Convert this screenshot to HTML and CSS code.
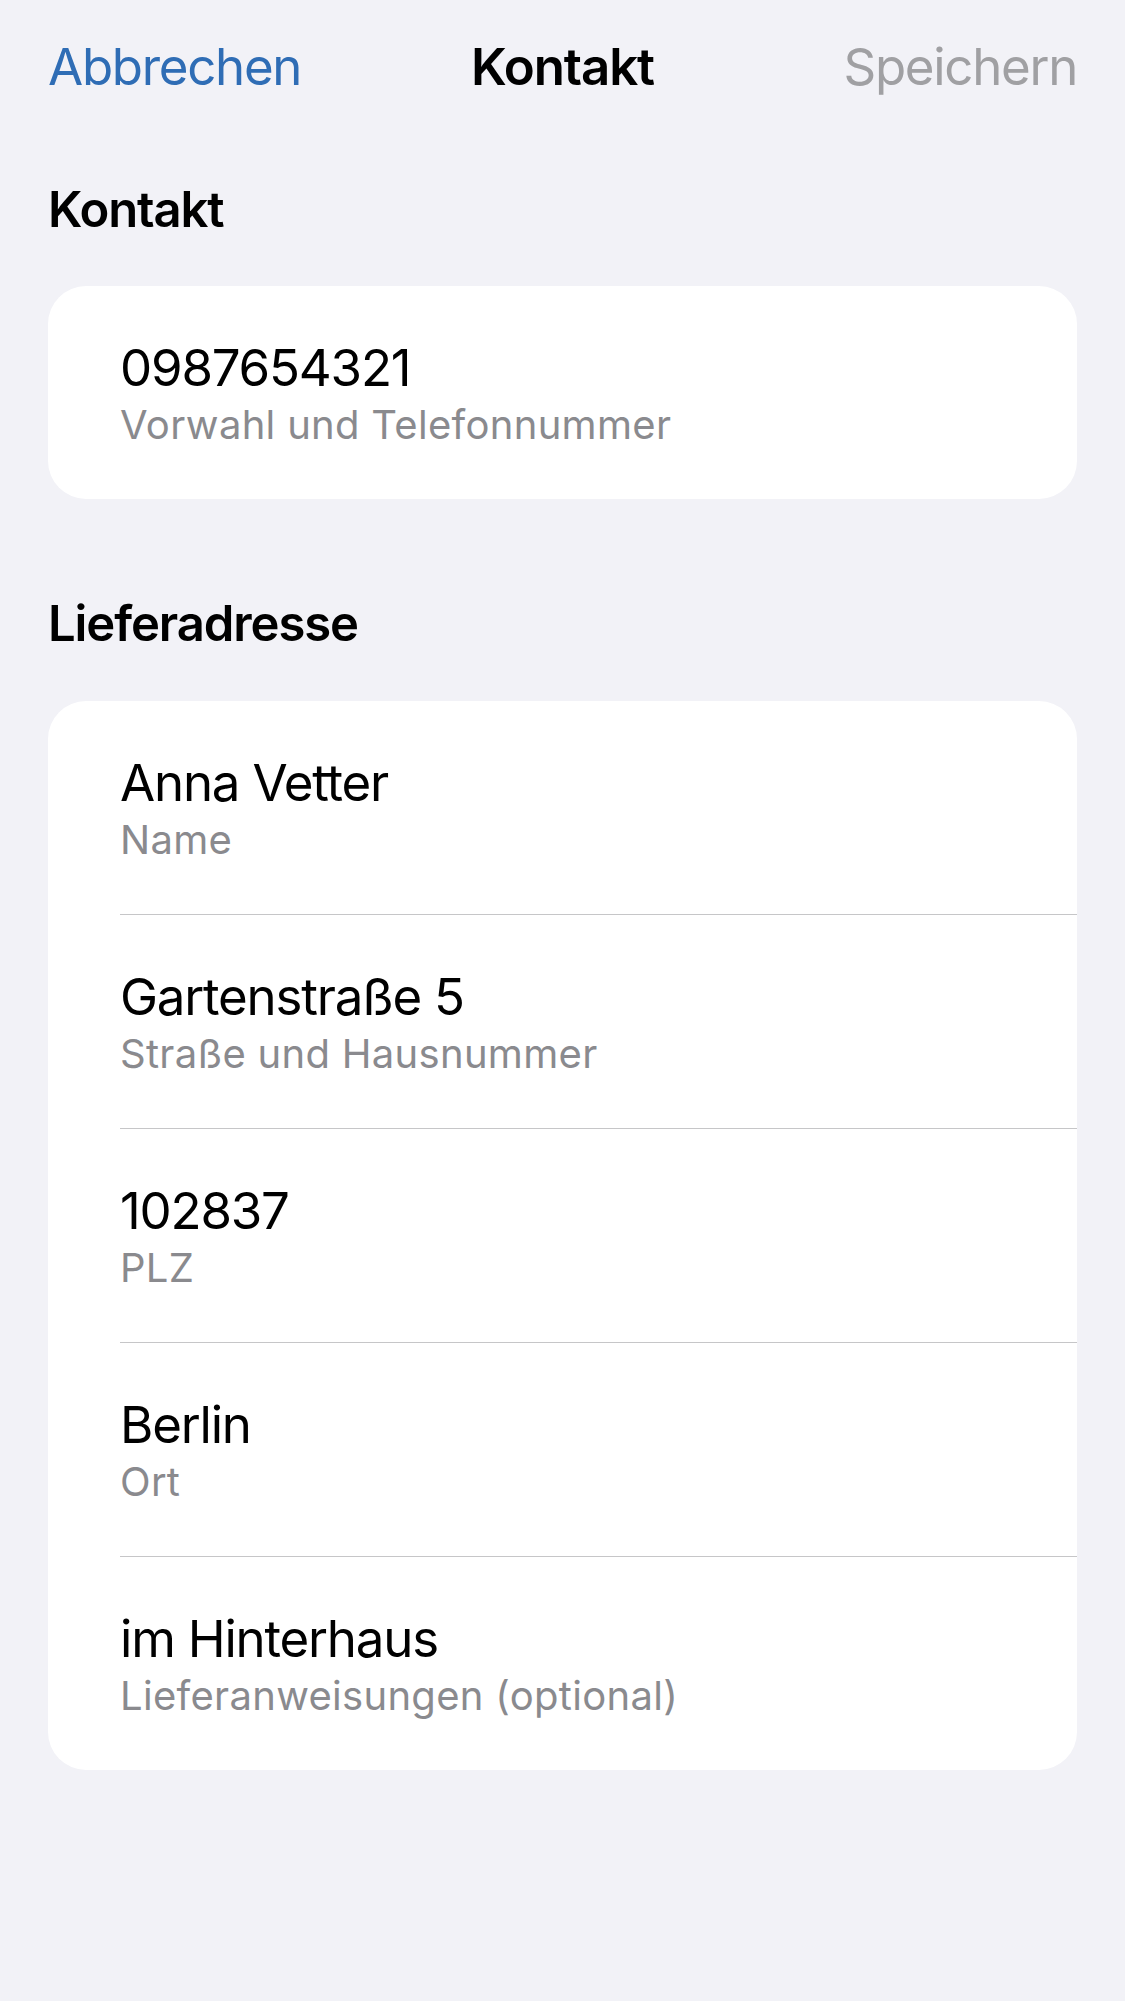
FILE: index.html
```html
<!DOCTYPE html>
<html lang="de">
<head>
<meta charset="utf-8">
<title>Kontakt</title>
<link rel="stylesheet" href="styles.css">
</head>
<body>
<div class="screen">
  <header class="navbar">
    <span class="nav-btn nav-cancel">Abbrechen</span>
    <span class="nav-title">Kontakt</span>
    <span class="nav-btn nav-save">Speichern</span>
  </header>

  <h2 class="section-title section-first">Kontakt</h2>
  <div class="card">
    <div class="row">
      <div class="value">0987654321</div>
      <div class="label">Vorwahl und Telefonnummer</div>
    </div>
  </div>

  <h2 class="section-title section-second">Lieferadresse</h2>
  <div class="card">
    <div class="row">
      <div class="value">Anna Vetter</div>
      <div class="label">Name</div>
    </div>
    <div class="row">
      <div class="value">Gartenstraße 5</div>
      <div class="label">Straße und Hausnummer</div>
    </div>
    <div class="row">
      <div class="value">102837</div>
      <div class="label">PLZ</div>
    </div>
    <div class="row">
      <div class="value">Berlin</div>
      <div class="label">Ort</div>
    </div>
    <div class="row">
      <div class="value">im Hinterhaus</div>
      <div class="label">Lieferanweisungen (optional)</div>
    </div>
  </div>
</div>
</body>
</html>
```
FILE: styles.css
```css
* { box-sizing: border-box; }

html, body {
  margin: 0;
  padding: 0;
  background: #f2f2f7;
}

body {
  font-family: Inter, "Noto Sans", "Liberation Sans", sans-serif;
  color: #000;
  min-height: 2001px;
}

.screen {
  padding: 0 48px 0 48px;
}

.navbar {
  display: grid;
  grid-template-columns: 1fr auto 1fr;
  align-items: baseline;
  padding-top: 36px;
  height: 97px;
}

.nav-btn {
  font-size: 51px;
  line-height: 61px;
  font-weight: 400;
  letter-spacing: -1.3px;
}

.nav-cancel {
  color: #2f6db5;
  justify-self: start;
}

.nav-save {
  color: #a0a0a3;
  justify-self: end;
}

.nav-title {
  font-size: 51px;
  line-height: 61px;
  font-weight: 600;
  letter-spacing: -1.1px;
  justify-self: center;
}

.section-title {
  margin: 0;
  font-size: 49px;
  line-height: 59px;
  font-weight: 600;
  letter-spacing: -1.1px;
}

.section-first {
  margin-top: 83px;
  margin-bottom: 47px;
}

.section-second {
  margin-top: 95px;
  margin-bottom: 48px;
}

.card {
  background: #ffffff;
  border-radius: 38px;
  overflow: hidden;
}

.row {
  margin-left: 72px;
  padding: 51px 0 50px 0;
}

.row + .row {
  border-top: 1px solid #c6c6c8;
}

.value {
  font-size: 51px;
  line-height: 61px;
  font-weight: 400;
  letter-spacing: -1.2px;
  color: #000;
}

.label {
  margin-top: 3px;
  font-size: 40px;
  line-height: 48px;
  letter-spacing: 0.3px;
  color: #8a8a8e;
}
```
